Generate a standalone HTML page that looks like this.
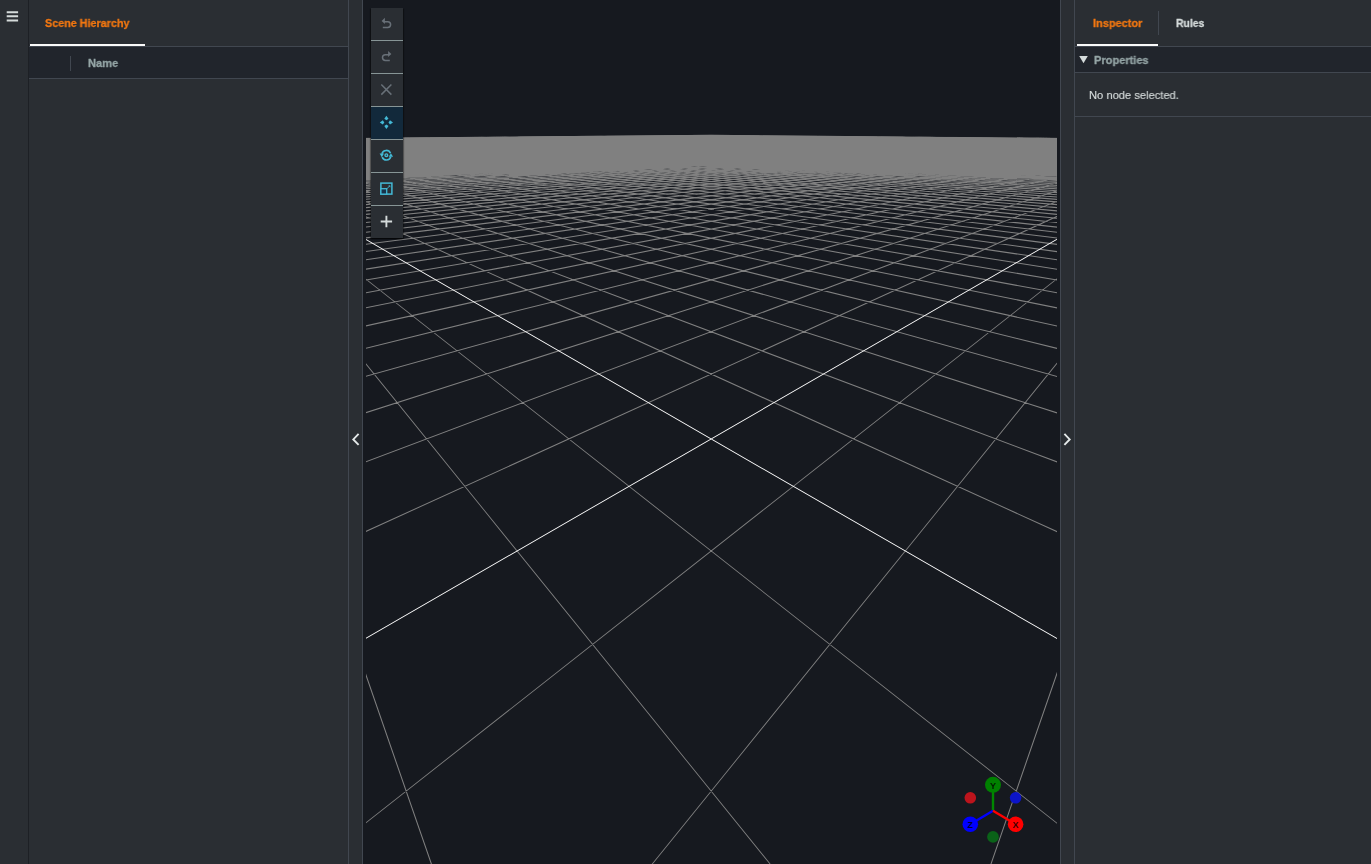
<!DOCTYPE html>
<html lang="en">
<head>
<meta charset="utf-8">
<title>Scene Composer</title>
<style>
html,body{margin:0;padding:0;}
body{width:1371px;height:864px;overflow:hidden;position:relative;background:#2a2e33;
  font-family:"Liberation Sans",Arial,sans-serif;font-size:12px;color:#d5dbdb;}
.abs{position:absolute;}
.txt{position:absolute;white-space:nowrap;line-height:14px;will-change:transform;-webkit-text-stroke:0.15px currentColor;}
.b{font-weight:bold;-webkit-text-stroke:0.3px currentColor;}
#viewport{position:absolute;left:363px;top:0;width:697px;height:864px;background:#16191f;overflow:hidden;}
.vline{position:absolute;top:0;width:1px;height:864px;background:#414750;}
.hline{position:absolute;height:1px;background:#414750;}
#toolbar{position:absolute;left:371px;top:8px;width:32px;height:230px;background:#2a2e33;box-shadow:0 1px 1px 0 rgba(0,0,0,.35),1px 1px 1px 0 rgba(0,0,0,.3),-1px 1px 1px 0 rgba(0,0,0,.3);}
#toolbar .item{position:absolute;left:0;width:32px;height:32px;}
#toolbar .sep{position:absolute;left:0;width:32px;height:1px;background:#879596;}
</style>
</head>
<body>

<!-- left icon strip -->
<svg class="abs" style="left:4px;top:8px" width="18" height="16" viewBox="4 8 18 16"><path d="M6.7 12.3H18.1M6.7 16.35H18.1M6.7 20.4H18.1" stroke="#d5dbdb" stroke-width="2" fill="none"/></svg>
<div class="vline" style="left:28px;background:#1d2025"></div>

<!-- left panel : Scene Hierarchy -->
<div class="txt b" id="t-scene" style="left:45.00px;top:16.10px;color:#f27711;font-size:11.2px;transform-origin:0 0;transform:scaleX(0.9625);">Scene Hierarchy</div>
<div class="hline" style="left:29px;top:46px;width:319px;"></div>
<div class="abs" style="left:30px;top:44px;width:115px;height:2px;background:#fafafa"></div>
<div class="abs" style="left:29px;top:47px;width:319px;height:31px;background:#21252c"></div>
<div class="abs" style="left:70px;top:56px;width:1px;height:15px;background:#414750"></div>
<div class="txt b" id="t-name" style="left:87.80px;top:56.10px;color:#95a5a6;font-size:11.2px;transform-origin:0 0;transform:scaleX(0.9907);">Name</div>
<div class="hline" style="left:29px;top:78px;width:319px;"></div>

<!-- splitters -->
<div class="vline" style="left:348px;"></div>
<div class="vline" style="left:362px;"></div>
<div class="vline" style="left:1060px;"></div>
<div class="vline" style="left:1074px;"></div>
<svg class="abs" style="left:349px;top:429px" width="13" height="21" viewBox="349 429 13 21"><path d="M358.6 433.9L353.3 439.4L358.6 444.9" fill="none" stroke="#e4e9e9" stroke-width="1.9"/></svg>
<svg class="abs" style="left:1061px;top:429px" width="13" height="21" viewBox="1061 429 13 21"><path d="M1064.4 433.9L1069.7 439.4L1064.4 444.9" fill="none" stroke="#e4e9e9" stroke-width="1.9"/></svg>

<!-- 3D viewport -->
<div id="viewport">
<svg width="697" height="864" viewBox="363 0 697 864" style="position:absolute;left:0;top:0">
<clipPath id="cv"><path d="M366.00 137.71L711.20 134.76L1057.00 137.71L1057.00 864.00L366.00 864.00Z"/></clipPath>
<g clip-path="url(#cv)">
<path d="M366.00 137.71L711.20 134.76L1057.00 137.71L1057.00 160.00L366.00 160.00Z" fill="#808080"/>
<path d="M711.20 134.71L1060.00 137.69L1060.00 138.79L711.20 135.81ZM711.20 135.81L363.00 138.78L363.00 137.68L711.20 134.71ZM710.15 134.72L1060.00 137.72L1060.00 138.82L710.15 135.82ZM712.25 135.82L363.00 138.81L363.00 137.71L712.25 134.72ZM709.09 134.73L1060.00 137.75L1060.00 138.85L709.09 135.83ZM713.31 135.83L363.00 138.84L363.00 137.74L713.31 134.73ZM708.03 134.74L1060.00 137.78L1060.00 138.88L708.03 135.84ZM714.37 135.84L363.00 138.87L363.00 137.77L714.37 134.74ZM706.96 134.75L1060.00 137.81L1060.00 138.91L706.96 135.85ZM715.44 135.85L363.00 138.90L363.00 137.80L715.44 134.75ZM705.89 134.76L1060.00 137.84L1060.00 138.94L705.89 135.86ZM716.51 135.86L363.00 138.93L363.00 137.83L716.51 134.76ZM704.81 134.77L1060.00 137.87L1060.00 138.97L704.81 135.87ZM717.59 135.87L363.00 138.97L363.00 137.87L717.59 134.77ZM703.73 134.78L1060.00 137.90L1060.00 139.00L703.73 135.88ZM718.67 135.88L363.00 139.00L363.00 137.90L718.67 134.78ZM702.65 134.79L1060.00 137.93L1060.00 139.03L702.65 135.89ZM719.75 135.89L363.00 139.03L363.00 137.93L719.75 134.79ZM701.56 134.79L1060.00 137.97L1060.00 139.07L701.56 135.89ZM720.84 135.89L363.00 139.06L363.00 137.96L720.84 134.79ZM700.47 134.80L1060.00 138.00L1060.00 139.10L700.47 135.90ZM721.93 135.90L363.00 139.09L363.00 137.99L721.93 134.80ZM699.37 134.81L1060.00 138.03L1060.00 139.13L699.37 135.91ZM723.03 135.91L363.00 139.12L363.00 138.02L723.03 134.81ZM698.27 134.82L1060.00 138.06L1060.00 139.16L698.27 135.92ZM724.13 135.92L363.00 139.16L363.00 138.06L724.13 134.82ZM697.17 134.83L1060.00 138.09L1060.00 139.19L697.17 135.93ZM725.23 135.93L363.00 139.19L363.00 138.09L725.23 134.83ZM696.06 134.84L1060.00 138.13L1060.00 139.23L696.06 135.94ZM726.34 135.94L363.00 139.22L363.00 138.12L726.34 134.84ZM694.94 134.85L1060.00 138.16L1060.00 139.26L694.94 135.95ZM727.46 135.95L363.00 139.26L363.00 138.16L727.46 134.85ZM693.82 134.86L1060.00 138.19L1060.00 139.29L693.82 135.96ZM728.58 135.96L363.00 139.29L363.00 138.19L728.58 134.86ZM692.70 134.87L1060.00 138.23L1060.00 139.33L692.70 135.97ZM729.70 135.97L363.00 139.32L363.00 138.22L729.70 134.87ZM691.57 134.88L1060.00 138.26L1060.00 139.36L691.57 135.98ZM730.83 135.98L363.00 139.36L363.00 138.26L730.83 134.88ZM690.44 134.89L1060.00 138.30L1060.00 139.40L690.44 135.99ZM731.96 135.99L363.00 139.39L363.00 138.29L731.96 134.89ZM689.30 134.90L1060.00 138.33L1060.00 139.43L689.30 136.00ZM733.10 136.00L363.00 139.43L363.00 138.33L733.10 134.90ZM688.16 134.91L1060.00 138.37L1060.00 139.47L688.16 136.01ZM734.24 136.01L363.00 139.46L363.00 138.36L734.24 134.91ZM687.01 134.92L1060.00 138.40L1060.00 139.50L687.01 136.02ZM735.39 136.02L363.00 139.50L363.00 138.40L735.39 134.92ZM685.86 134.93L1060.00 138.44L1060.00 139.54L685.86 136.03ZM736.54 136.03L363.00 139.53L363.00 138.43L736.54 134.93ZM684.70 134.94L1060.00 138.47L1060.00 139.57L684.70 136.04ZM737.70 136.04L363.00 139.57L363.00 138.47L737.70 134.94ZM683.54 134.95L1060.00 138.51L1060.00 139.61L683.54 136.05ZM738.86 136.05L363.00 139.61L363.00 138.51L738.86 134.95ZM682.38 134.96L1060.00 138.55L1060.00 139.65L682.38 136.06ZM740.02 136.06L363.00 139.64L363.00 138.54L740.02 134.96ZM681.20 134.97L1060.00 138.58L1060.00 139.68L681.20 136.07ZM741.20 136.07L363.00 139.68L363.00 138.58L741.20 134.97ZM680.03 134.98L1060.00 138.62L1060.00 139.72L680.03 136.08ZM742.37 136.08L363.00 139.72L363.00 138.62L742.37 134.98ZM678.85 134.99L1060.00 138.66L1060.00 139.76L678.85 136.09ZM743.55 136.09L363.00 139.75L363.00 138.65L743.55 134.99ZM677.66 135.00L1060.00 138.70L1060.00 139.80L677.66 136.10ZM744.74 136.10L363.00 139.79L363.00 138.69L744.74 135.00ZM676.47 135.01L1060.00 138.74L1060.00 139.84L676.47 136.11ZM745.93 136.11L363.00 139.83L363.00 138.73L745.93 135.01ZM675.28 135.02L1060.00 138.77L1060.00 139.87L675.28 136.12ZM747.12 136.12L363.00 139.87L363.00 138.77L747.12 135.02ZM674.08 135.03L1060.00 138.81L1060.00 139.91L674.08 136.13ZM748.32 136.13L363.00 139.91L363.00 138.81L748.32 135.03ZM672.87 135.04L1060.00 138.85L1060.00 139.95L672.87 136.14ZM749.53 136.14L363.00 139.95L363.00 138.85L749.53 135.04ZM671.66 135.05L1060.00 138.89L1060.00 139.99L671.66 136.15ZM750.74 136.15L363.00 139.99L363.00 138.89L750.74 135.05ZM670.44 135.06L1060.00 138.93L1060.00 140.03L670.44 136.16ZM751.96 136.16L363.00 140.03L363.00 138.93L751.96 135.06ZM669.22 135.07L1060.00 138.97L1060.00 140.07L669.22 136.17ZM753.18 136.17L363.00 140.07L363.00 138.97L753.18 135.07ZM668.00 135.08L1060.00 139.01L1060.00 140.11L668.00 136.18ZM754.40 136.18L363.00 140.11L363.00 139.01L754.40 135.08ZM666.76 135.09L1060.00 139.06L1060.00 140.16L666.76 136.19ZM755.64 136.19L363.00 140.15L363.00 139.05L755.64 135.09ZM665.53 135.10L1060.00 139.10L1060.00 140.20L665.53 136.20ZM756.87 136.20L363.00 140.19L363.00 139.09L756.87 135.10ZM664.28 135.11L1060.00 139.14L1060.00 140.24L664.28 136.21ZM758.12 136.21L363.00 140.23L363.00 139.13L758.12 135.11ZM663.04 135.12L1060.00 139.18L1060.00 140.28L663.04 136.22ZM759.36 136.22L363.00 140.28L363.00 139.18L759.36 135.12ZM661.78 135.13L1060.00 139.22L1060.00 140.32L661.78 136.23ZM760.62 136.23L363.00 140.32L363.00 139.22L760.62 135.13ZM660.53 135.14L1060.00 139.27L1060.00 140.37L660.53 136.24ZM761.87 136.24L363.00 140.36L363.00 139.26L761.87 135.14ZM659.26 135.16L1060.00 139.31L1060.00 140.41L659.26 136.26ZM763.14 136.26L363.00 140.41L363.00 139.31L763.14 135.16ZM657.99 135.17L1060.00 139.36L1060.00 140.46L657.99 136.27ZM764.41 136.27L363.00 140.45L363.00 139.35L764.41 135.17ZM656.72 135.18L1060.00 139.40L1060.00 140.50L656.72 136.28ZM765.68 136.28L363.00 140.49L363.00 139.39L765.68 135.18ZM655.44 135.19L1060.00 139.44L1060.00 140.54L655.44 136.29ZM766.96 136.29L363.00 140.54L363.00 139.44L766.96 135.19ZM654.15 135.20L1060.00 139.49L1060.00 140.59L654.15 136.30ZM768.25 136.30L363.00 140.58L363.00 139.48L768.25 135.20ZM652.86 135.21L1060.00 139.54L1060.00 140.64L652.86 136.31ZM769.54 136.31L363.00 140.63L363.00 139.53L769.54 135.21ZM651.56 135.22L1060.00 139.58L1060.00 140.68L651.56 136.32ZM770.84 136.32L363.00 140.68L363.00 139.58L770.84 135.22ZM650.26 135.23L1060.00 139.63L1060.00 140.73L650.26 136.33ZM772.14 136.33L363.00 140.72L363.00 139.62L772.14 135.23ZM648.95 135.24L1060.00 139.68L1060.00 140.78L648.95 136.34ZM773.45 136.34L363.00 140.77L363.00 139.67L773.45 135.24ZM647.64 135.25L1060.00 139.72L1060.00 140.82L647.64 136.35ZM774.76 136.35L363.00 140.82L363.00 139.72L774.76 135.25ZM646.32 135.27L1060.00 139.77L1060.00 140.87L646.32 136.37ZM776.08 136.37L363.00 140.87L363.00 139.77L776.08 135.27ZM644.99 135.28L1060.00 139.82L1060.00 140.92L644.99 136.38ZM777.41 136.38L363.00 140.91L363.00 139.81L777.41 135.28ZM643.66 135.29L1060.00 139.87L1060.00 140.97L643.66 136.39ZM778.74 136.39L363.00 140.96L363.00 139.86L778.74 135.29ZM642.32 135.30L1060.00 139.92L1060.00 141.02L642.32 136.40ZM780.08 136.40L363.00 141.01L363.00 139.91L780.08 135.30ZM640.98 135.31L1060.00 139.97L1060.00 141.07L640.98 136.41ZM781.42 136.41L363.00 141.06L363.00 139.96L781.42 135.31ZM639.63 135.32L1060.00 140.02L1060.00 141.12L639.63 136.42ZM782.77 136.42L363.00 141.11L363.00 140.01L782.77 135.32ZM638.27 135.33L1060.00 140.07L1060.00 141.17L638.27 136.43ZM784.13 136.43L363.00 141.16L363.00 140.06L784.13 135.33ZM636.91 135.35L1060.00 140.12L1060.00 141.22L636.91 136.45ZM785.49 136.45L363.00 141.22L363.00 140.12L785.49 135.35ZM635.54 135.36L1060.00 140.18L1060.00 141.28L635.54 136.46ZM786.86 136.46L363.00 141.27L363.00 140.17L786.86 135.36ZM634.17 135.37L1060.00 140.23L1060.00 141.33L634.17 136.47ZM788.23 136.47L363.00 141.32L363.00 140.22L788.23 135.37ZM632.79 135.38L1060.00 140.28L1060.00 141.38L632.79 136.48ZM789.61 136.48L363.00 141.37L363.00 140.27L789.61 135.38ZM631.40 135.39L1060.00 140.34L1060.00 141.44L631.40 136.49ZM791.00 136.49L363.00 141.43L363.00 140.33L791.00 135.39ZM630.01 135.40L1060.00 140.39L1060.00 141.49L630.01 136.50ZM792.39 136.50L363.00 141.48L363.00 140.38L792.39 135.40ZM628.61 135.42L1060.00 140.44L1060.00 141.54L628.61 136.52ZM793.79 136.52L363.00 141.54L363.00 140.44L793.79 135.42ZM627.20 135.43L1060.00 140.50L1060.00 141.60L627.20 136.53ZM795.20 136.53L363.00 141.59L363.00 140.49L795.20 135.43ZM625.79 135.44L1060.00 140.56L1060.00 141.66L625.79 136.54ZM796.61 136.54L363.00 141.65L363.00 140.55L796.61 135.44ZM624.37 135.45L1060.00 140.61L1060.00 141.71L624.37 136.55ZM798.03 136.55L363.00 141.71L363.00 140.61L798.03 135.45ZM622.95 135.47L1060.00 140.67L1060.00 141.77L622.95 136.57ZM799.45 136.57L363.00 141.76L363.00 140.66L799.45 135.47ZM621.52 135.48L1060.00 140.73L1060.00 141.83L621.52 136.58ZM800.88 136.58L363.00 141.82L363.00 140.72L800.88 135.48ZM620.08 135.49L1060.00 140.79L1060.00 141.89L620.08 136.59ZM802.32 136.59L363.00 141.88L363.00 140.78L802.32 135.49ZM618.63 135.50L1060.00 140.85L1060.00 141.95L618.63 136.60ZM803.77 136.60L363.00 141.94L363.00 140.84L803.77 135.50ZM617.18 135.51L1060.00 140.91L1060.00 142.01L617.18 136.61ZM805.22 136.61L363.00 142.00L363.00 140.90L805.22 135.51ZM615.72 135.53L1060.00 140.97L1060.00 142.07L615.72 136.63ZM806.68 136.63L363.00 142.06L363.00 140.96L806.68 135.53ZM614.26 135.54L1060.00 141.03L1060.00 142.13L614.26 136.64ZM808.14 136.64L363.00 142.12L363.00 141.02L808.14 135.54ZM612.79 135.55L1060.00 141.09L1060.00 142.19L612.79 136.65ZM809.61 136.65L363.00 142.19L363.00 141.09L809.61 135.55ZM611.31 135.56L1060.00 141.16L1060.00 142.26L611.31 136.66ZM811.09 136.66L363.00 142.25L363.00 141.15L811.09 135.56ZM609.82 135.58L1060.00 141.22L1060.00 142.32L609.82 136.68ZM812.58 136.68L363.00 142.31L363.00 141.21L812.58 135.58ZM608.33 135.59L1060.00 141.28L1060.00 142.38L608.33 136.69ZM814.07 136.69L363.00 142.38L363.00 141.28L814.07 135.59ZM606.83 135.60L1060.00 141.35L1060.00 142.45L606.83 136.70ZM815.57 136.70L363.00 142.44L363.00 141.34L815.57 135.60ZM605.32 135.62L1060.00 141.41L1060.00 142.51L605.32 136.72ZM817.08 136.72L363.00 142.51L363.00 141.41L817.08 135.62ZM603.81 135.63L1060.00 141.48L1060.00 142.58L603.81 136.73ZM818.59 136.73L363.00 142.57L363.00 141.47L818.59 135.63ZM602.29 135.64L1060.00 141.55L1060.00 142.65L602.29 136.74ZM820.11 136.74L363.00 142.64L363.00 141.54L820.11 135.64ZM600.76 135.65L1060.00 141.62L1060.00 142.72L600.76 136.75ZM821.64 136.75L363.00 142.71L363.00 141.61L821.64 135.65ZM599.22 135.67L1060.00 141.69L1060.00 142.79L599.22 136.77ZM823.18 136.77L363.00 142.78L363.00 141.68L823.18 135.67ZM597.68 135.68L1060.00 141.76L1060.00 142.86L597.68 136.78ZM824.72 136.78L363.00 142.85L363.00 141.75L824.72 135.68ZM596.13 135.69L1060.00 141.83L1060.00 142.93L596.13 136.79ZM826.27 136.79L363.00 142.92L363.00 141.82L826.27 135.69ZM594.57 135.71L1060.00 141.90L1060.00 143.00L594.57 136.81ZM827.83 136.81L363.00 142.99L363.00 141.89L827.83 135.71ZM593.00 135.72L1060.00 141.97L1060.00 143.07L593.00 136.82ZM829.40 136.82L363.00 143.06L363.00 141.96L829.40 135.72ZM591.43 135.73L1060.00 142.04L1060.00 143.14L591.43 136.83ZM830.97 136.83L363.00 143.14L363.00 142.04L830.97 135.73ZM589.85 135.75L1060.00 142.12L1060.00 143.22L589.85 136.85ZM832.55 136.85L363.00 143.21L363.00 142.11L832.55 135.75ZM588.26 135.76L1060.00 142.19L1060.00 143.29L588.26 136.86ZM834.14 136.86L363.00 143.29L363.00 142.19L834.14 135.76ZM586.67 135.77L1060.00 142.27L1060.00 143.37L586.67 136.87ZM835.73 136.87L363.00 143.36L363.00 142.26L835.73 135.77ZM585.06 135.79L1060.00 142.35L1060.00 143.45L585.06 136.89ZM837.34 136.89L363.00 143.44L363.00 142.34L837.34 135.79ZM583.45 135.80L1060.00 142.43L1060.00 143.53L583.45 136.90ZM838.95 136.90L363.00 143.52L363.00 142.42L838.95 135.80ZM581.83 135.82L1060.00 142.51L1060.00 143.61L581.83 136.92ZM840.57 136.92L363.00 143.60L363.00 142.50L840.57 135.82ZM580.20 135.83L1060.00 142.59L1060.00 143.69L580.20 136.93ZM842.20 136.93L363.00 143.68L363.00 142.58L842.20 135.83ZM578.57 135.84L1060.00 142.67L1060.00 143.77L578.57 136.94ZM843.83 136.94L363.00 143.76L363.00 142.66L843.83 135.84ZM576.93 135.86L1060.00 142.75L1060.00 143.85L576.93 136.96ZM845.47 136.96L363.00 143.84L363.00 142.74L845.47 135.86ZM575.27 135.87L1060.00 142.83L1060.00 143.93L575.27 136.97ZM847.13 136.97L363.00 143.92L363.00 142.82L847.13 135.87ZM573.61 135.89L1060.00 142.92L1060.00 144.02L573.61 136.99ZM848.79 136.99L363.00 144.01L363.00 142.91L848.79 135.89ZM571.95 135.90L1060.00 143.00L1060.00 144.10L571.95 137.00ZM850.45 137.00L363.00 144.10L363.00 143.00L850.45 135.90ZM570.27 135.91L1060.00 143.09L1060.00 144.19L570.27 137.01ZM852.13 137.01L363.00 144.18L363.00 143.08L852.13 135.91ZM568.59 135.93L1060.00 143.18L1060.00 144.28L568.59 137.03ZM853.81 137.03L363.00 144.27L363.00 143.17L853.81 135.93ZM566.89 135.94L1060.00 143.27L1060.00 144.37L566.89 137.04ZM855.51 137.04L363.00 144.36L363.00 143.26L855.51 135.94ZM565.19 135.96L1060.00 143.36L1060.00 144.46L565.19 137.06ZM857.21 137.06L363.00 144.45L363.00 143.35L857.21 135.96ZM563.48 135.97L1060.00 143.45L1060.00 144.55L563.48 137.07ZM858.92 137.07L363.00 144.54L363.00 143.44L858.92 135.97ZM561.76 135.99L1060.00 143.54L1060.00 144.64L561.76 137.09ZM860.64 137.09L363.00 144.63L363.00 143.53L860.64 135.99ZM560.03 136.00L1060.00 143.64L1060.00 144.74L560.03 137.10ZM862.37 137.10L363.00 144.73L363.00 143.63L862.37 136.00ZM558.30 136.02L1060.00 143.73L1060.00 144.83L558.30 137.12ZM864.10 137.12L363.00 144.82L363.00 143.72L864.10 136.02ZM556.55 136.03L1060.00 143.83L1060.00 144.93L556.55 137.13ZM865.85 137.13L363.00 144.92L363.00 143.82L865.85 136.03ZM554.80 136.05L1060.00 143.93L1060.00 145.03L554.80 137.15ZM867.60 137.15L363.00 145.02L363.00 143.92L867.60 136.05ZM553.04 136.06L1060.00 144.03L1060.00 145.13L553.04 137.16ZM869.36 137.16L363.00 145.12L363.00 144.02L869.36 136.06ZM551.26 136.08L1060.00 144.13L1060.00 145.23L551.26 137.18ZM871.14 137.18L363.00 145.22L363.00 144.12L871.14 136.08ZM549.48 136.09L1060.00 144.23L1060.00 145.33L549.48 137.19ZM872.92 137.19L363.00 145.32L363.00 144.22L872.92 136.09ZM547.69 136.11L1060.00 144.34L1060.00 145.44L547.69 137.21ZM874.71 137.21L363.00 145.43L363.00 144.33L874.71 136.11ZM545.89 136.12L1060.00 144.44L1060.00 145.54L545.89 137.22ZM876.51 137.22L363.00 145.53L363.00 144.43L876.51 136.12ZM544.08 136.14L1060.00 144.55L1060.00 145.65L544.08 137.24ZM878.32 137.24L363.00 145.64L363.00 144.54L878.32 136.14ZM542.27 136.15L1060.00 144.66L1060.00 145.76L542.27 137.25ZM880.13 137.25L363.00 145.75L363.00 144.65L880.13 136.15ZM540.44 136.17L1060.00 144.77L1060.00 145.87L540.44 137.27ZM881.96 137.27L363.00 145.86L363.00 144.76L881.96 136.17ZM538.60 136.18L1060.00 144.89L1060.00 145.99L538.60 137.28ZM883.80 137.28L363.00 145.98L363.00 144.88L883.80 136.18ZM536.75 136.20L1060.00 145.00L1060.00 146.10L536.75 137.30ZM885.65 137.30L363.00 146.09L363.00 144.99L885.65 136.20ZM534.90 136.22L1060.00 145.12L1060.00 146.22L534.90 137.32ZM887.50 137.32L363.00 146.21L363.00 145.11L887.50 136.22ZM533.03 136.23L1060.00 145.23L1060.00 146.33L533.03 137.33ZM889.37 137.33L363.00 146.32L363.00 145.22L889.37 136.23ZM531.16 136.25L1060.00 145.35L1060.00 146.45L531.16 137.35ZM891.24 137.35L363.00 146.44L363.00 145.34L891.24 136.25ZM529.27 136.26L1060.00 145.48L1060.00 146.58L529.27 137.36ZM893.13 137.36L363.00 146.56L363.00 145.46L893.13 136.26ZM527.37 136.28L1060.00 145.60L1060.00 146.70L527.37 137.38ZM895.03 137.38L363.00 146.69L363.00 145.59L895.03 136.28ZM525.47 136.30L1060.00 145.72L1060.00 146.82L525.47 137.40ZM896.93 137.40L363.00 146.81L363.00 145.71L896.93 136.30ZM523.55 136.31L1060.00 145.85L1060.00 146.95L523.55 137.41ZM898.85 137.41L363.00 146.94L363.00 145.84L898.85 136.31ZM521.62 136.33L1060.00 145.98L1060.00 147.08L521.62 137.43ZM900.78 137.43L363.00 147.07L363.00 145.97L900.78 136.33ZM519.69 136.35L1060.00 146.11L1060.00 147.21L519.69 137.45ZM902.71 137.45L363.00 147.20L363.00 146.10L902.71 136.35ZM517.74 136.36L1060.00 146.25L1060.00 147.35L517.74 137.46ZM904.66 137.46L363.00 147.34L363.00 146.24L904.66 136.36ZM515.78 136.38L1060.00 146.39L1060.00 147.49L515.78 137.48ZM906.62 137.48L363.00 147.47L363.00 146.37L906.62 136.38ZM513.81 136.40L1060.00 146.52L1060.00 147.62L513.81 137.50ZM908.59 137.50L363.00 147.61L363.00 146.51L908.59 136.40ZM511.84 136.41L1060.00 146.67L1060.00 147.77L511.84 137.51ZM910.56 137.51L363.00 147.76L363.00 146.66L910.56 136.41ZM509.85 136.43L1060.00 146.81L1060.00 147.91L509.85 137.53ZM912.55 137.53L363.00 147.90L363.00 146.80L912.55 136.43ZM507.85 136.45L1060.00 146.96L1060.00 148.06L507.85 137.55ZM914.55 137.55L363.00 148.05L363.00 146.95L914.55 136.45ZM505.83 136.46L1060.00 147.11L1060.00 148.21L505.83 137.56ZM916.57 137.56L363.00 148.19L363.00 147.09L916.57 136.46ZM503.81 136.48L1060.00 147.26L1060.00 148.36L503.81 137.58ZM918.59 137.58L363.00 148.35L363.00 147.25L918.59 136.48ZM501.78 136.50L1060.00 147.41L1060.00 148.51L501.78 137.60ZM920.62 137.60L363.00 148.50L363.00 147.40L920.62 136.50ZM499.73 136.52L1060.00 147.57L1060.00 148.67L499.73 137.62ZM922.67 137.62L363.00 148.66L363.00 147.56L922.67 136.52ZM497.68 136.53L1060.00 147.73L1060.00 148.83L497.68 137.63ZM924.72 137.63L363.00 148.82L363.00 147.72L924.72 136.53ZM495.61 136.55L1060.00 147.89L1060.00 148.99L495.61 137.65ZM926.79 137.65L363.00 148.98L363.00 147.88L926.79 136.55ZM493.53 136.57L1060.00 148.06L1060.00 149.16L493.53 137.67ZM928.87 137.67L363.00 149.15L363.00 148.05L928.87 136.57ZM491.44 136.59L1060.00 148.23L1060.00 149.33L491.44 137.69ZM930.96 137.69L363.00 149.32L363.00 148.22L930.96 136.59ZM489.34 136.61L1060.00 148.40L1060.00 149.50L489.34 137.71ZM933.06 137.71L363.00 149.49L363.00 148.39L933.06 136.61ZM487.23 136.62L1060.00 148.58L1060.00 149.68L487.23 137.72ZM935.17 137.72L363.00 149.66L363.00 148.56L935.17 136.62ZM485.10 136.64L1060.00 148.76L1060.00 149.86L485.10 137.74ZM937.30 137.74L363.00 149.84L363.00 148.74L937.30 136.64ZM482.96 136.66L1060.00 148.94L1060.00 150.04L482.96 137.76ZM939.44 137.76L363.00 150.03L363.00 148.93L939.44 136.66ZM480.81 136.68L1060.00 149.12L1060.00 150.22L480.81 137.78ZM941.59 137.78L363.00 150.21L363.00 149.11L941.59 136.68ZM478.65 136.70L1060.00 149.31L1060.00 150.41L478.65 137.80ZM943.75 137.80L363.00 150.40L363.00 149.30L943.75 136.70ZM476.48 136.71L1060.00 149.51L1060.00 150.61L476.48 137.81ZM945.92 137.81L363.00 150.60L363.00 149.50L945.92 136.71ZM474.29 136.73L1060.00 149.71L1060.00 150.81L474.29 137.83ZM948.11 137.83L363.00 150.79L363.00 149.69L948.11 136.73ZM472.09 136.75L1060.00 149.91L1060.00 151.01L472.09 137.85ZM950.31 137.85L363.00 150.99L363.00 149.89L950.31 136.75ZM469.88 136.77L1060.00 150.11L1060.00 151.21L469.88 137.87ZM952.52 137.87L363.00 151.20L363.00 150.10L952.52 136.77ZM467.66 136.79L1060.00 150.33L1060.00 151.43L467.66 137.89ZM954.74 137.89L363.00 151.41L363.00 150.31L954.74 136.79ZM465.42 136.81L1060.00 150.54L1060.00 151.64L465.42 137.91ZM956.98 137.91L363.00 151.63L363.00 150.53L956.98 136.81ZM463.17 136.83L1060.00 150.76L1060.00 151.86L463.17 137.93ZM959.23 137.93L363.00 151.85L363.00 150.75L959.23 136.83ZM460.91 136.85L1060.00 150.98L1060.00 152.08L460.91 137.95ZM961.49 137.95L363.00 152.07L363.00 150.97L961.49 136.85ZM458.63 136.87L1060.00 151.21L1060.00 152.31L458.63 137.97ZM963.77 137.97L363.00 152.30L363.00 151.20L963.77 136.87ZM456.34 136.89L1060.00 151.45L1060.00 152.55L456.34 137.99ZM966.06 137.99L363.00 152.53L363.00 151.43L966.06 136.89ZM454.04 136.91L1060.00 151.69L1060.00 152.79L454.04 138.01ZM968.36 138.01L363.00 152.77L363.00 151.67L968.36 136.91ZM451.72 136.93L1060.00 151.93L1060.00 153.03L451.72 138.03ZM970.68 138.03L363.00 153.02L363.00 151.92L970.68 136.93ZM449.39 136.95L1060.00 152.19L1060.00 153.29L449.39 138.05ZM973.01 138.05L363.00 153.27L363.00 152.17L973.01 136.95ZM447.05 136.97L1060.00 152.44L1060.00 153.54L447.05 138.07ZM975.35 138.07L363.00 153.53L363.00 152.43L975.35 136.97ZM444.69 136.99L1060.00 152.70L1060.00 153.80L444.69 138.09ZM977.71 138.09L363.00 153.79L363.00 152.69L977.71 136.99ZM442.32 137.01L1060.00 152.97L1060.00 154.07L442.32 138.11ZM980.08 138.11L363.00 154.06L363.00 152.96L980.08 137.01ZM439.94 137.03L1060.00 153.25L1060.00 154.35L439.94 138.13ZM982.46 138.13L363.00 154.33L363.00 153.23L982.46 137.03ZM437.54 137.05L1060.00 153.53L1060.00 154.63L437.54 138.15ZM984.86 138.15L363.00 154.62L363.00 153.52L984.86 137.05ZM435.12 137.07L1060.00 153.82L1060.00 154.92L435.12 138.17ZM987.28 138.17L363.00 154.91L363.00 153.81L987.28 137.07ZM432.69 137.09L1060.00 154.12L1060.00 155.22L432.69 138.19ZM989.71 138.19L363.00 155.20L363.00 154.10L989.71 137.09ZM430.25 137.11L1060.00 154.42L1060.00 155.52L430.25 138.21ZM992.15 138.21L363.00 155.51L363.00 154.41L992.15 137.11ZM427.79 137.13L1060.00 154.73L1060.00 155.83L427.79 138.23ZM994.61 138.23L363.00 155.82L363.00 154.72L994.61 137.13ZM425.32 137.15L1060.00 155.06L1060.00 156.16L425.32 138.25ZM997.08 138.25L363.00 156.14L363.00 155.04L997.08 137.15ZM422.83 137.17L1060.00 155.38L1060.00 156.48L422.83 138.27ZM999.57 138.27L363.00 156.47L363.00 155.37L999.57 137.17ZM420.33 137.19L1060.00 155.72L1060.00 156.82L420.33 138.29ZM1002.07 138.29L363.00 156.80L363.00 155.70L1002.07 137.19ZM417.81 137.22L1060.00 156.07L1060.00 157.17L417.81 138.32ZM1004.59 138.32L363.00 157.15L363.00 156.05L1004.59 137.22ZM415.28 137.24L1060.00 156.42L1060.00 157.52L415.28 138.34ZM1007.12 138.34L363.00 157.51L363.00 156.41L1007.12 137.24ZM412.73 137.26L1060.00 156.79L1060.00 157.89L412.73 138.36ZM1009.67 138.36L363.00 157.87L363.00 156.77L1009.67 137.26ZM410.16 137.28L1060.00 157.17L1060.00 158.27L410.16 138.38ZM1012.24 138.38L363.00 158.25L363.00 157.15L1012.24 137.28ZM407.58 137.30L1060.00 157.55L1060.00 158.65L407.58 138.40ZM1014.82 138.40L363.00 158.64L363.00 157.54L1014.82 137.30ZM404.99 137.32L1060.00 157.95L1060.00 159.05L404.99 138.42ZM1017.41 138.42L363.00 159.03L363.00 157.93L1017.41 137.32ZM402.37 137.35L1060.00 158.36L1060.00 159.46L402.37 138.45ZM1020.03 138.45L363.00 159.44L363.00 158.34L1020.03 137.35ZM399.74 137.37L1060.00 158.79L1060.00 159.89L399.74 138.47ZM1022.66 138.47L363.00 159.87L363.00 158.77L1022.66 137.37ZM397.10 137.39L1060.00 159.22L1060.00 160.32L397.10 138.49ZM1025.30 138.49L363.00 160.30L363.00 159.20L1025.30 137.39ZM394.44 137.41L1060.00 159.67L1060.00 160.77L394.44 138.51ZM1027.96 138.51L363.00 160.75L363.00 159.65L1027.96 137.41ZM391.76 137.44L1060.00 160.13L1060.00 161.23L391.76 138.54ZM1030.64 138.54L363.00 161.21L363.00 160.11L1030.64 137.44ZM389.06 137.46L1060.00 160.61L1060.00 161.71L389.06 138.56ZM1033.34 138.56L363.00 161.69L363.00 160.59L1033.34 137.46ZM386.35 137.48L1060.00 161.10L1060.00 162.20L386.35 138.58ZM1036.05 138.58L363.00 162.18L363.00 161.08L1036.05 137.48ZM383.62 137.51L1060.00 161.61L1060.00 162.71L383.62 138.61ZM1038.78 138.61L363.00 162.69L363.00 161.59L1038.78 137.51ZM380.87 137.53L1060.00 162.14L1060.00 163.24L380.87 138.63ZM1041.53 138.63L363.00 163.22L363.00 162.12L1041.53 137.53ZM378.11 137.55L1060.00 162.68L1060.00 163.78L378.11 138.65ZM1044.29 138.65L363.00 163.76L363.00 162.66L1044.29 137.55ZM375.32 137.58L1060.00 163.25L1060.00 164.35L375.32 138.68ZM1047.08 138.68L363.00 164.32L363.00 163.22L1047.08 137.58ZM372.52 137.60L1060.00 163.83L1060.00 164.93L372.52 138.70ZM1049.88 138.70L363.00 164.91L363.00 163.81L1049.88 137.60ZM369.70 137.63L1060.00 164.43L1060.00 165.53L369.70 138.73ZM1052.70 138.73L363.00 165.51L363.00 164.41L1052.70 137.63ZM366.87 137.65L1060.00 165.06L1060.00 166.16L366.87 138.75ZM1055.53 138.75L363.00 166.14L363.00 165.04L1055.53 137.65ZM364.01 137.67L1060.00 165.71L1060.00 166.81L364.01 138.77ZM1058.39 138.77L363.00 166.78L363.00 165.68L1058.39 137.67ZM363.00 137.78L1060.00 166.38L1060.00 167.48L363.00 138.88ZM1060.00 138.85L363.00 167.46L363.00 166.36L1060.00 137.75ZM363.00 137.92L1060.00 167.08L1060.00 168.18L363.00 139.02ZM1060.00 139.00L363.00 168.16L363.00 167.06L1060.00 137.90ZM363.00 138.08L1060.00 167.81L1060.00 168.91L363.00 139.18ZM1060.00 139.15L363.00 168.89L363.00 167.79L1060.00 138.05ZM363.00 138.23L1060.00 168.57L1060.00 169.67L363.00 139.33ZM1060.00 139.31L363.00 169.64L363.00 168.54L1060.00 138.21ZM363.00 138.40L1060.00 169.36L1060.00 170.46L363.00 139.50ZM1060.00 139.47L363.00 170.43L363.00 169.33L1060.00 138.37ZM363.00 138.57L1060.00 170.18L1060.00 171.28L363.00 139.67ZM1060.00 139.65L363.00 171.25L363.00 170.15L1060.00 138.55ZM363.00 138.75L1060.00 171.03L1060.00 172.13L363.00 139.85ZM1060.00 139.83L363.00 172.10L363.00 171.00L1060.00 138.73ZM363.00 138.94L1060.00 171.93L1060.00 173.03L363.00 140.04ZM1060.00 140.01L363.00 173.00L363.00 171.90L1060.00 138.91ZM363.00 139.14L1060.00 172.86L1060.00 173.96L363.00 140.24ZM1060.00 140.21L363.00 173.93L363.00 172.83L1060.00 139.11ZM363.00 139.34L1060.00 173.84L1060.00 174.94L363.00 140.44ZM1060.00 140.41L363.00 174.91L363.00 173.81L1060.00 139.31ZM363.00 139.56L1060.00 174.86L1060.00 175.96L363.00 140.66ZM1060.00 140.63L363.00 175.93L363.00 174.83L1060.00 139.53ZM363.00 139.78L1060.00 175.93L1060.00 177.03L363.00 140.88ZM1060.00 140.85L363.00 177.00L363.00 175.90L1060.00 139.75ZM363.00 140.02L1060.00 177.05L1060.00 178.15L363.00 141.12ZM1060.00 141.09L363.00 178.12L363.00 177.02L1060.00 139.99ZM363.00 140.27L1060.00 178.23L1060.00 179.33L363.00 141.37ZM1060.00 141.33L363.00 179.30L363.00 178.20L1060.00 140.23ZM363.00 140.53L1060.00 179.47L1060.00 180.57L363.00 141.63ZM1060.00 141.59L363.00 180.54L363.00 179.44L1060.00 140.49ZM363.00 140.80L1060.00 180.78L1060.00 181.88L363.00 141.90ZM1060.00 141.87L363.00 181.84L363.00 180.74L1060.00 140.77ZM363.00 141.09L1060.00 182.15L1060.00 183.25L363.00 142.19ZM1060.00 142.16L363.00 183.22L363.00 182.12L1060.00 141.06ZM363.00 141.40L1060.00 183.61L1060.00 184.71L363.00 142.50ZM1060.00 142.46L363.00 184.67L363.00 183.57L1060.00 141.36ZM363.00 141.72L1060.00 185.15L1060.00 186.25L363.00 142.82ZM1060.00 142.78L363.00 186.21L363.00 185.11L1060.00 141.68ZM363.00 142.06L1060.00 186.78L1060.00 187.88L363.00 143.16ZM1060.00 143.13L363.00 187.84L363.00 186.74L1060.00 142.03ZM363.00 142.43L1060.00 188.51L1060.00 189.61L363.00 143.53ZM1060.00 143.49L363.00 189.57L363.00 188.47L1060.00 142.39ZM363.00 142.81L1060.00 190.34L1060.00 191.44L363.00 143.91ZM1060.00 143.87L363.00 191.40L363.00 190.30L1060.00 142.77ZM363.00 143.23L1060.00 192.30L1060.00 193.40L363.00 144.33ZM1060.00 144.28L363.00 193.36L363.00 192.26L1060.00 143.18ZM363.00 143.66L1060.00 194.39L1060.00 195.49L363.00 144.76ZM1060.00 144.72L363.00 195.45L363.00 194.35L1060.00 143.62ZM363.00 144.13L1060.00 196.62L1060.00 197.72L363.00 145.23ZM1060.00 145.19L363.00 197.68L363.00 196.58L1060.00 144.09ZM363.00 144.64L1060.00 199.02L1060.00 200.12L363.00 145.74ZM1060.00 145.69L363.00 200.07L363.00 198.97L1060.00 144.59ZM363.00 145.18L1060.00 201.59L1060.00 202.69L363.00 146.28ZM1060.00 146.23L363.00 202.64L363.00 201.54L1060.00 145.13ZM363.00 145.76L1060.00 204.37L1060.00 205.47L363.00 146.86ZM1060.00 146.81L363.00 205.42L363.00 204.32L1060.00 145.71ZM363.00 146.39L1060.00 207.37L1060.00 208.47L363.00 147.49ZM1060.00 147.44L363.00 208.41L363.00 207.31L1060.00 146.34ZM363.00 147.08L1060.00 210.62L1060.00 211.72L363.00 148.18ZM1060.00 148.12L363.00 211.66L363.00 210.56L1060.00 147.02ZM363.00 147.82L1060.00 214.15L1060.00 215.25L363.00 148.92ZM1060.00 148.86L363.00 215.20L363.00 214.10L1060.00 147.76ZM363.00 148.63L1060.00 218.01L1060.00 219.11L363.00 149.73ZM1060.00 149.67L363.00 219.06L363.00 217.96L1060.00 148.57ZM363.00 149.52L1060.00 222.25L1060.00 223.35L363.00 150.62ZM1060.00 150.56L363.00 223.29L363.00 222.19L1060.00 149.46ZM363.00 150.50L1060.00 226.91L1060.00 228.01L363.00 151.60ZM1060.00 151.54L363.00 227.95L363.00 226.85L1060.00 150.44ZM363.00 151.59L1060.00 232.07L1060.00 233.17L363.00 152.69ZM1060.00 152.62L363.00 233.10L363.00 232.00L1060.00 151.52ZM363.00 152.80L1060.00 237.81L1060.00 238.91L363.00 153.90ZM1060.00 153.82L363.00 238.84L363.00 237.74L1060.00 152.72ZM363.00 154.15L1060.00 244.24L1060.00 245.34L363.00 155.25ZM1060.00 155.17L363.00 245.26L363.00 244.16L1060.00 154.07ZM363.00 155.67L1060.00 251.48L1060.00 252.58L363.00 156.77ZM1060.00 156.69L363.00 252.50L363.00 251.40L1060.00 155.59ZM363.00 157.40L1060.00 259.71L1060.00 260.81L363.00 158.50ZM1060.00 158.41L363.00 260.72L363.00 259.62L1060.00 157.31ZM363.00 159.38L1060.00 269.13L1060.00 270.23L363.00 160.48ZM1060.00 160.39L363.00 270.14L363.00 269.04L1060.00 159.29ZM363.00 161.67L1060.00 280.03L1060.00 281.13L363.00 162.77ZM1060.00 162.67L363.00 281.03L363.00 279.93L1060.00 161.57ZM363.00 164.36L1060.00 292.79L1060.00 293.89L363.00 165.46ZM1060.00 165.35L363.00 293.78L363.00 292.68L1060.00 164.25ZM363.00 167.54L1060.00 307.92L1060.00 309.02L363.00 168.64ZM1060.00 168.52L363.00 308.89L363.00 307.79L1060.00 167.42ZM363.00 171.37L1060.00 326.15L1060.00 327.25L363.00 172.47ZM1060.00 172.34L363.00 327.11L363.00 326.01L1060.00 171.24ZM363.00 176.08L1060.00 348.55L1060.00 349.65L363.00 177.18ZM1060.00 177.03L363.00 349.50L363.00 348.40L1060.00 175.93ZM363.00 182.01L1060.00 376.72L1060.00 377.82L363.00 183.11ZM1060.00 182.94L363.00 377.66L363.00 376.56L1060.00 181.84ZM363.00 189.69L1060.00 413.25L1060.00 414.35L363.00 190.79ZM1060.00 190.60L363.00 414.16L363.00 413.06L1060.00 189.50ZM363.00 200.04L1060.00 462.49L1060.00 463.59L363.00 201.14ZM1060.00 200.92L363.00 463.36L363.00 462.26L1060.00 199.82ZM363.00 214.76L1060.00 532.45L1060.00 533.55L363.00 215.86ZM1060.00 215.58L363.00 533.28L363.00 532.18L1060.00 214.48ZM363.00 276.28L1060.00 825.03L1060.00 826.13L363.00 277.38ZM1060.00 276.91L363.00 825.66L363.00 824.56L1060.00 275.81ZM363.55 360.33L773.08 867.00L771.98 867.00L362.45 360.33ZM1060.55 359.59L650.42 867.00L649.32 867.00L1059.45 359.59ZM363.55 666.50L433.00 867.00L431.90 867.00L362.45 666.50ZM1060.55 664.77L990.50 867.00L989.40 867.00L1059.45 664.77Z" fill="#808080"/>
<path d="M363.00 237.37L1060.00 639.78L1060.00 640.78L363.00 238.37ZM1060.00 238.02L363.00 640.43L363.00 639.43L1060.00 237.02Z" fill="#ffffff"/>
</g>
<!-- axis gizmo -->
<g>
<circle cx="970.3" cy="797.8" r="5.8" fill="#bd141c"/>
<circle cx="1015.6" cy="797.8" r="5.8" fill="#0c14c8"/>
<circle cx="993" cy="836.9" r="5.9" fill="#0a6218"/>
<line x1="993" y1="810.7" x2="993" y2="785" stroke="#008800" stroke-width="2.4"/>
<line x1="993" y1="810.7" x2="970.3" y2="824.2" stroke="#0000ff" stroke-width="2.4"/>
<line x1="993" y1="810.7" x2="1015.6" y2="824.2" stroke="#ff0000" stroke-width="2.4"/>
<circle cx="993" cy="784.8" r="8" fill="#008000"/>
<circle cx="1015.6" cy="824.2" r="7.8" fill="#ff0000"/>
<circle cx="970.3" cy="824.2" r="7.8" fill="#0000ff"/>
<g font-family="Liberation Sans, Arial, sans-serif" font-size="9" font-weight="bold" text-anchor="middle" fill="#000" fill-opacity=".8">
<text x="993" y="789">Y</text>
<text x="1015.6" y="828.3">X</text>
<text x="970.3" y="828.3">Z</text>
</g>
</g>
</svg>
</div>

<!-- toolbar -->
<div id="toolbar">
  <div class="item" style="top:99px;background:#12293b"></div>
  <div class="sep" style="top:32px"></div>
  <div class="sep" style="top:65px"></div>
  <div class="sep" style="top:98px"></div>
  <div class="sep" style="top:131px"></div>
  <div class="sep" style="top:164px"></div>
  <div class="sep" style="top:197px"></div>
  <svg width="32" height="230" viewBox="371 8 32 230" style="position:absolute;left:0;top:0">
    <!-- undo -->
    <g stroke="#687078" fill="none" stroke-width="1.5">
      <path d="M384 21.7H387.7A2.9 2.9 0 0 1 387.7 27.5H382.8"/>
      <path d="M381.6 20.9L384.9 17.8V24Z" fill="#687078" stroke="none"/>
    </g>
    <!-- redo -->
    <g stroke="#687078" fill="none" stroke-width="1.5">
      <path d="M389 54.7H385.4A2.9 2.9 0 0 0 385.4 60.5H389.8"/>
      <path d="M391.4 54L388.1 50.9V57.1Z" fill="#687078" stroke="none"/>
    </g>
    <!-- delete X -->
    <path d="M381.3 84.5L391.4 94.6M391.4 84.5L381.3 94.6" stroke="#687078" stroke-width="1.5" fill="none"/>
    <!-- move -->
    <g fill="#44b9d6">
      <path d="M386.4 115.8L388.5 118.8L386.4 120.3L384.3 118.8Z"/>
      <path d="M386.4 129L388.5 126L386.4 124.5L384.3 126Z"/>
      <path d="M379.8 122.4L382.8 120.3L384.3 122.4L382.8 124.5Z"/>
      <path d="M393 122.4L390 120.3L388.5 122.4L390 124.5Z"/>
    </g>
    <!-- rotate -->
    <g stroke="#44b9d6" fill="none" stroke-width="1.6">
      <path d="M381.9 153.7A4.55 4.55 0 0 1 390.5 153.3"/>
      <path d="M390.8 156.7A4.55 4.55 0 0 1 382.2 157.1"/>
      <circle cx="386.35" cy="155.2" r="1.35" stroke-width="1.4"/>
      <path d="M379.6 153.6L381.8 157.2L384 153.6Z" fill="#44b9d6" stroke="none"/>
      <path d="M388.7 156.8L390.9 153.2L393.1 156.8Z" fill="#44b9d6" stroke="none"/>
    </g>
    <!-- scale -->
    <g stroke="#44b9d6" fill="none" stroke-width="1.5">
      <rect x="380.9" y="183.1" width="11" height="11"/>
      <rect x="380.9" y="188.7" width="5.8" height="5.4" fill="#17324a" stroke-width="1.3"/>
      <path d="M387.2 188.4L389.6 186" stroke-width="1"/>
      <path d="M388.2 185.4H390.3V187.5Z" fill="#44b9d6" stroke="none"/>
    </g>
    <!-- add -->
    <path d="M386.4 215.8V227.2M380.7 221.5H392.1" stroke="#d5dbdb" stroke-width="1.9" fill="none"/>
  </svg>
</div>

<!-- right panel : Inspector -->
<div class="txt b" id="t-insp" style="left:1092.70px;top:16.10px;color:#f27711;font-size:11.2px;transform-origin:0 0;transform:scaleX(0.9790);">Inspector</div>
<div class="abs" style="left:1158px;top:11px;width:1px;height:24px;background:#414750"></div>
<div class="txt b" id="t-rules" style="left:1175.90px;top:16.10px;color:#d5dbdb;font-size:11.2px;transform-origin:0 0;transform:scaleX(0.9288);">Rules</div>
<div class="hline" style="left:1075px;top:46px;width:296px;"></div>
<div class="abs" style="left:1077px;top:44px;width:81px;height:2px;background:#fafafa"></div>
<div class="abs" style="left:1075px;top:47px;width:296px;height:25px;background:#21252c"></div>
<svg class="abs" style="left:1078px;top:55px" width="11" height="9" viewBox="1078 55 11 9"><path d="M1079.2 56.1H1087.8L1083.5 63.2Z" fill="#d5dbdb"/></svg>
<div class="txt b" id="t-prop" style="left:1093.80px;top:52.90px;color:#95a5a6;font-size:11.2px;transform-origin:0 0;transform:scaleX(0.9866);">Properties</div>
<div class="hline" style="left:1075px;top:72px;width:296px;"></div>
<div class="txt" id="t-nonode" style="left:1088.60px;top:88.10px;color:#d5dbdb;font-size:11.2px;transform-origin:0 0;transform:scaleX(0.9957);">No node selected.</div>
<div class="hline" style="left:1075px;top:116px;width:296px;"></div>

</body>
</html>
